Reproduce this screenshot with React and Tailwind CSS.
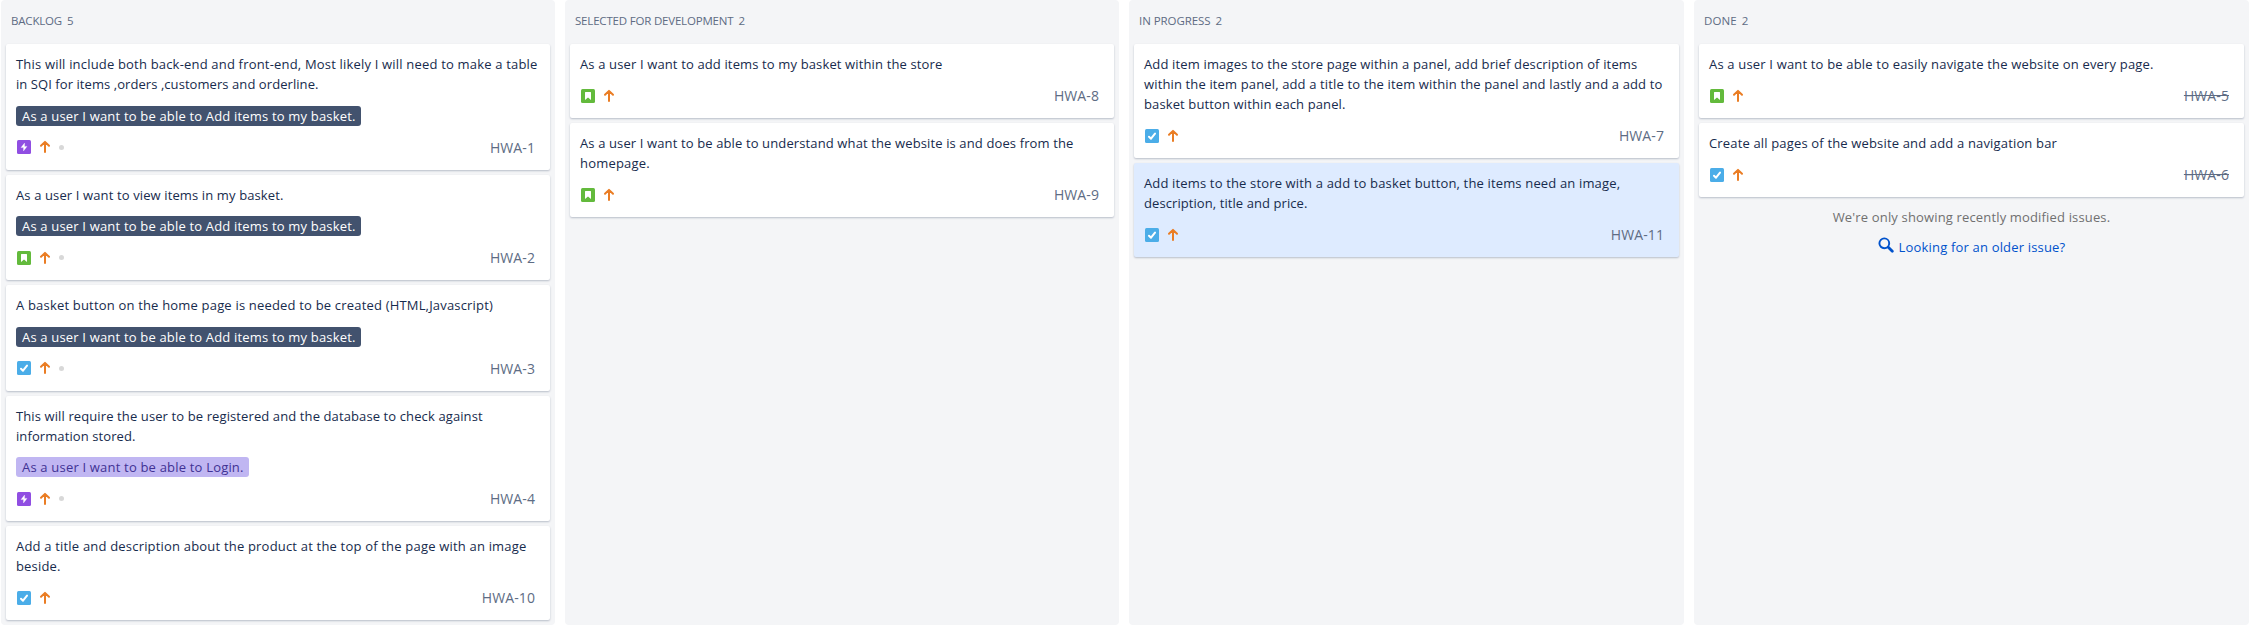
const CART = { label: "As a user I want to be able to Add items to my basket.", color: "bg-[#42526e] text-white", spacing: "tracking-[0.179px]" };
const LOGIN = { label: "As a user I want to be able to Login.", color: "bg-[#c0b6f2] text-[#403294]", spacing: "tracking-[0.19px]" };

const COLUMNS = [
  {
    name: "BACKLOG",
    count: 5,
    spacing: "tracking-[-0.18px]",
    cards: [
      {
        id: "HWA-1", type: "epic", dot: true, epic: CART,
        lines: [
          ["This will include both back-end and front-end, Most likely I will need to make a table", "tracking-[0.185px]"],
          ["in SQI for items ,orders ,customers and orderline.", "tracking-[0.067px]"],
        ],
      },
      { id: "HWA-2", type: "story", dot: true, epic: CART, lines: [["As a user I want to view items in my basket.", "tracking-[0.123px]"]] },
      { id: "HWA-3", type: "task", dot: true, epic: CART, lines: [["A basket button on the home page is needed to be created (HTML,Javascript)", "tracking-[0.184px]"]] },
      {
        id: "HWA-4", type: "epic", dot: true, epic: LOGIN,
        lines: [
          ["This will require the user to be registered and the database to check against", "tracking-[0.11px]"],
          ["information stored.", "tracking-[0.093px]"],
        ],
      },
      {
        id: "HWA-10", type: "task",
        lines: [
          ["Add a title and description about the product at the top of the page with an image", "tracking-[0.191px]"],
          ["beside.", "tracking-[0.169px]"],
        ],
      },
    ],
  },
  {
    name: "SELECTED FOR DEVELOPMENT",
    count: 2,
    spacing: "tracking-[-0.19px]",
    cards: [
      { id: "HWA-8", type: "story", lines: [["As a user I want to add items to my basket within the store", "tracking-[0.136px]"]] },
      {
        id: "HWA-9", type: "story",
        lines: [
          ["As a user I want to be able to understand what the website is and does from the", "tracking-[0.124px]"],
          ["homepage.", "tracking-[0.2px]"],
        ],
      },
    ],
  },
  {
    name: "IN PROGRESS",
    count: 2,
    spacing: "tracking-[-0.07px]",
    cards: [
      {
        id: "HWA-7", type: "task",
        lines: [
          ["Add item images to the store page within a panel, add brief description of items", "tracking-[0.15px]"],
          ["within the item panel, add a title to the item within the panel and lastly and a add to", "tracking-[0.138px]"],
          ["basket button within each panel.", "tracking-[0.119px]"],
        ],
      },
      {
        id: "HWA-11", type: "task", selected: true,
        lines: [
          ["Add items to the store with a add to basket button, the items need an image,", "tracking-[0.154px]"],
          ["description, title and price.", "tracking-[0.079px]"],
        ],
      },
    ],
  },
  {
    name: "DONE",
    count: 2,
    spacing: "tracking-[0.1px]",
    footer: true,
    cards: [
      { id: "HWA-5", type: "story", done: true, lines: [["As a user I want to be able to easily navigate the website on every page.", "tracking-[0.175px]"]] },
      { id: "HWA-6", type: "task", done: true, lines: [["Create all pages of the website and add a navigation bar", "tracking-[0.16px]"]] },
    ],
  },
];

const TYPE_COLORS = { epic: "#904ee2", story: "#63ba3c", task: "#4bade8" };

function TypeIcon({ type }) {
  return (
    <svg width="16" height="16" viewBox="0 0 16 16" className="shrink-0">
      <rect x="1" y="1" width="14" height="14" rx="1.5" fill={TYPE_COLORS[type]} />
      {type === "epic" && <path d="M8.6 4 L5 8.6 H7.5 V12 L11 7.4 H8.6 Z" fill="#fff" stroke="#fff" strokeWidth="0.3" strokeLinejoin="round" />}
      {type === "story" && <path d="M5 4.5 C5 4.2 5.2 4 5.5 4 H10.5 C10.8 4 11 4.2 11 4.5 V12 L8 9.4 L5 12 Z" fill="#fff" />}
      {type === "task" && <path d="M5 8.7 L7 10.7 L11 5.6" fill="none" stroke="#fff" strokeWidth="2" strokeLinecap="round" strokeLinejoin="round" />}
    </svg>
  );
}

function PriorityIcon() {
  return (
    <svg width="16" height="16" viewBox="0 0 16 16" className="ml-[5px] shrink-0" fill="none" stroke="#ea7d24" strokeWidth="2" strokeLinecap="round" strokeLinejoin="round">
      <path d="M8 13 V3.2 M4 6.8 L8 2.9 L12 6.8" />
    </svg>
  );
}

function Card({ card }) {
  return (
    <article className={`rounded-[2px] px-2.5 pt-2.5 shadow-[0_1px_2px_0_rgba(9,30,66,0.25)] ${card.selected ? "bg-[#deebff]" : "bg-white"} ${card.epic ? "pb-[14.5px]" : "pb-3.5"}`}>
      <div className="text-[13px] leading-5 whitespace-nowrap text-[#172b4d]">
        {card.lines.map(([text, spacing]) => (
          <p key={text} className={spacing}>{text}</p>
        ))}
      </div>
      {card.epic && (
        <div className="mt-[11.5px] flex">
          <span className={`h-5 rounded-[3px] pr-[5.5px] pl-1.5 text-[13px] leading-5 whitespace-nowrap ${card.epic.color} ${card.epic.spacing}`}>{card.epic.label}</span>
        </div>
      )}
      <div className={`flex h-4 items-center ${card.epic ? "mt-[13.5px]" : "mt-3.5"}`}>
        <TypeIcon type={card.type} />
        <PriorityIcon />
        {card.dot && <span className="ml-1.5 size-[5px] rounded-full bg-[#d8d8d8]" />}
        <span className={`mr-[5px] ml-auto text-[14px] leading-4 tracking-[0.1px] text-[#5e6c84] ${card.done ? "line-through" : ""} ${card.epic ? "pt-px" : ""}`}>{card.id}</span>
      </div>
    </article>
  );
}

function OlderIssues() {
  return (
    <div className="mt-2.5 text-center text-[13px] leading-5">
      <p className="tracking-[0.156px] text-[#707070]">We're only showing recently modified issues.</p>
      <a className="mt-2.5 flex items-start justify-center gap-[5px] text-[#0052cc]">
        <svg width="16" height="16" viewBox="0 0 16 16" fill="none" stroke="#0052cc">
          <circle cx="6.3" cy="6.3" r="4.9" strokeWidth="1.9" />
          <path d="M10.3 10.3 L14.3 14.3" strokeWidth="2.8" strokeLinecap="round" />
        </svg>
        <span className="tracking-[0.177px]">Looking for an older issue?</span>
      </a>
    </div>
  );
}

export default function App() {
  return (
    <main className="grid h-[625px] w-full grid-cols-[554px_554px_555px_555px] gap-2.5 overflow-hidden bg-white pl-px font-['Open_Sans','Noto_Sans',sans-serif]">
      {COLUMNS.map((column) => (
        <section key={column.name} className="flex min-w-0 flex-col rounded-[4px] bg-[#f4f5f7] px-[5px]">
          <h2 className="flex h-11 gap-[5px] pt-[11px] pl-[5px] text-[11.5px] leading-5 text-[#5e6c84]">
            <span className={column.spacing}>{column.name}</span>
            <span>{column.count}</span>
          </h2>
          <div className="flex flex-col gap-[5px]">
            {column.cards.map((card) => <Card key={card.id} card={card} />)}
          </div>
          {column.footer && <OlderIssues />}
        </section>
      ))}
    </main>
  );
}
